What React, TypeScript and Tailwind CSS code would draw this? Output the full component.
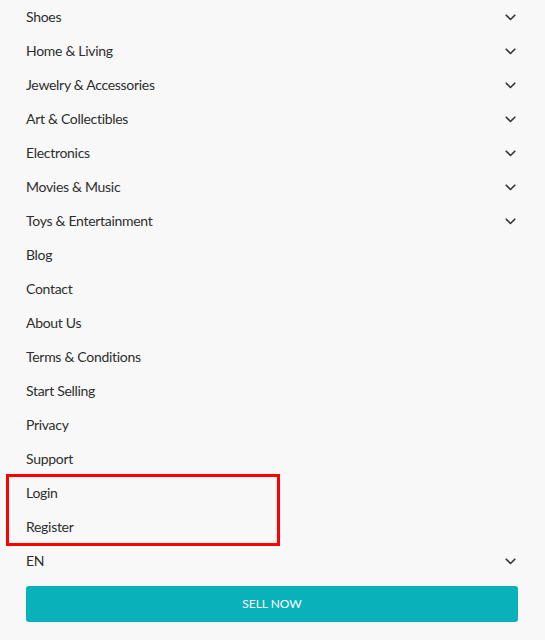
import React from 'react'

interface NavItem {
  label: string
  hasMenu?: boolean
}

const items: NavItem[] = [
  { label: 'Shoes', hasMenu: true },
  { label: 'Home & Living', hasMenu: true },
  { label: 'Jewelry & Accessories', hasMenu: true },
  { label: 'Art & Collectibles', hasMenu: true },
  { label: 'Electronics', hasMenu: true },
  { label: 'Movies & Music', hasMenu: true },
  { label: 'Toys & Entertainment', hasMenu: true },
  { label: 'Blog' },
  { label: 'Contact' },
  { label: 'About Us' },
  { label: 'Terms & Conditions' },
  { label: 'Start Selling' },
  { label: 'Privacy' },
  { label: 'Support' }
]

function Chevron () {
  return (
    <svg width="11" height="7" viewBox="0 0 11 7" fill="none" className="mr-[2px] mt-[3px] text-[#333]">
      <polyline points="1.2,1.2 5.5,5.5 9.8,1.2" stroke="currentColor" strokeWidth="1.6" strokeLinecap="round" strokeLinejoin="round" />
    </svg>
  )
}

function Row ({ label, hasMenu }: NavItem) {
  return (
    <div className="flex h-[34px] items-center justify-between pb-0.5">
      <span className="text-[14px] tracking-[-0.3px] text-[#2e2e2e]">{label}</span>
      {hasMenu && <Chevron />}
    </div>
  )
}

export default function App () {
  return (
    <div className="min-h-[640px] w-[545px] bg-[#f8f8f8] font-['Lato','Liberation_Sans',sans-serif]">
      <div className="relative pl-[26px] pr-[27px]">
        {items.map((item) => (
          <Row key={item.label} {...item} />
        ))}
        <div className="relative">
          <Row label="Login" />
          <Row label="Register" />
          <div className="pointer-events-none absolute left-[-20px] top-[-2px] h-[72px] w-[274px] border-[3px] border-[#ff0000]" />
        </div>
        <Row label="EN" hasMenu />
        <button className="mt-2 flex h-9 w-full items-center justify-center rounded-[3px] bg-[#09b1ba] text-[12px] text-white">
          SELL NOW
        </button>
      </div>
    </div>
  )
}
